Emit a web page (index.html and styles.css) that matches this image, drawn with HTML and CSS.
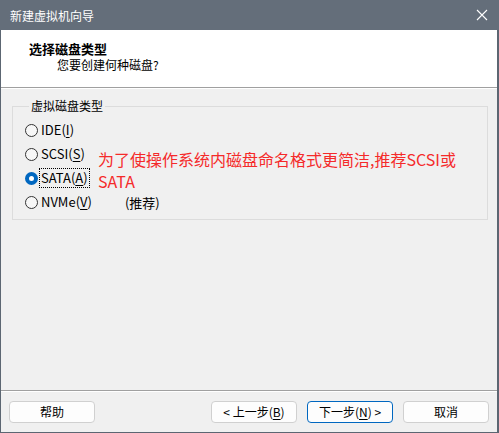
FILE: index.html
```html
<!DOCTYPE html>
<html lang="zh-CN">
<head>
<meta charset="utf-8">
<title>新建虚拟机向导</title>
<link rel="stylesheet" href="styles.css">
</head>
<body>
<div class="window">
  <div class="titlebar">
    <span class="title">新建虚拟机向导</span>
    <svg class="close" width="12" height="12" viewBox="0 0 12 12"><path d="M1 1 L11 11 M11 1 L1 11" stroke="#fff" stroke-width="1.1" fill="none"/></svg>
  </div>
  <div class="frame">
    <div class="header">
      <div class="h-title">选择磁盘类型</div>
      <div class="h-sub">您要创建何种磁盘?</div>
    </div>
    <div class="main">
      <fieldset class="group">
        <legend>虚拟磁盘类型</legend>
        <div class="opt"><span class="radio"></span><span class="lbl">IDE(<u>I</u>)</span></div>
        <div class="opt"><span class="radio"></span><span class="lbl">SCSI(<u>S</u>)</span></div>
        <div class="opt"><span class="radio checked"></span><span class="lbl focus">SATA(<u>A</u>)</span></div>
        <div class="opt"><span class="radio"></span><span class="lbl">NVMe(<u>V</u>)</span><span class="rec">(推荐)</span></div>
        <div class="note">为了使操作系统内磁盘命名格式更简洁,推荐SCSI或<br>SATA</div>
      </fieldset>
    </div>
    <div class="footer">
      <button class="btn">帮助</button>
      <div class="spacer"></div>
      <button class="btn">&lt; 上一步(<u>B</u>)</button>
      <button class="btn default">下一步(<u>N</u>) &gt;</button>
      <button class="btn">取消</button>
    </div>
  </div>
</div>
</body>
</html>
```
FILE: styles.css
```css
* { box-sizing: border-box; }
html, body { margin: 0; padding: 0; }
body {
  width: 499px;
  height: 433px;
  background: #1f2a36;
  font-family: "Noto Sans CJK SC", "Microsoft YaHei", sans-serif;
  font-size: 12px;
  color: #000;
  overflow: hidden;
}
.window {
  width: 499px;
  height: 433px;
  display: flex;
  flex-direction: column;
  background: #f0f0f0;
}
.titlebar {
  height: 30px;
  background: #646e7a;
  display: flex;
  align-items: center;
  padding: 0 10px 0 10px;
  color: #fff;
}
.title { font-size: 12px; flex: 1; letter-spacing: 0; }
.close { margin-right: 1px; }
.frame {
  flex: 1;
  display: flex;
  flex-direction: column;
  border-left: 1px solid #5c6672;
  border-right: 2px solid #5c6672;
  border-bottom: 1px solid #5c6672;
  background: #f0f0f0;
}
.header {
  height: 58px;
  background: #fff;
  border-bottom: 1px solid #a0a0a0;
  box-shadow: 0 1px 0 #fff;
  padding: 11px 0 0 28px;
}
.h-title { font-weight: bold; font-size: 13px; line-height: 16px; }
.h-sub { padding-left: 28px; line-height: 16px; }
.main {
  flex: 1;
  padding: 10px 9px 0 11px;
}
.group {
  position: relative;
  margin: 0;
  height: 122px;
  border: 1px solid #dcdcdc;
  padding: 4px 0 0 12px;
}
.group legend {
  padding: 0 2px;
  margin-left: 4px;
  line-height: 16px;
}
.opt {
  display: flex;
  align-items: center;
  height: 24px;
}
.radio {
  width: 13px;
  height: 13px;
  border: 1px solid #333;
  border-radius: 50%;
  background: #f7f7f7;
  margin-right: 1px;
  flex: none;
}
.radio.checked {
  border: 4px solid #0067c0;
  background: #fff;
}
.lbl { padding: 1px 1px; font-size: 13px; line-height: 16px; border: 1px dotted transparent; }
.lbl.focus { border-color: #000; }
.lbl u { text-decoration-thickness: 1px; text-underline-offset: 2px; }
.rec { margin-left: 31px; font-size: 13px; }
.note {
  position: absolute;
  left: 85px;
  top: 34px;
  color: #f52a2a;
  font-size: 16px;
  line-height: 22px;
}
.footer {
  height: 42px;
  border-top: 1px solid #a0a0a0;
  box-shadow: inset 0 1px 0 #fff;
  display: flex;
  align-items: flex-start;
  padding: 10px 8px 0 8px;
  gap: 10px;
}
.spacer { flex: 1; }
.btn {
  width: 86px;
  height: 22px;
  border: 1px solid #d0d0d0;
  border-radius: 4px;
  background: #fdfdfd;
  font-family: inherit;
  font-size: 12px;
  color: #000;
  padding: 0;
  line-height: 18px;
}
.btn.default { border-color: #0067c0; }
.btn u { text-underline-offset: 2px; }
```
